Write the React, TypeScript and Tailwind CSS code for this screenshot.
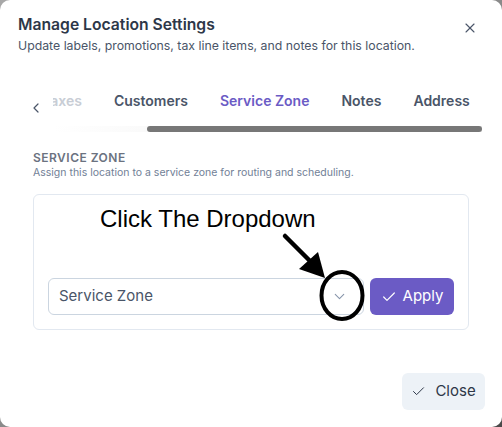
import React from "react";
import { Check, ChevronDown, ChevronLeft, X } from "lucide-react";

export default function App() {
  return (
    <div className="relative w-[502px] h-[427px] bg-linear-to-br from-[#a8a8a8] via-[#8a8a8a] to-[#4a4a4a] font-['Inter',sans-serif]">
      <div className="w-full h-full rounded-[10px] bg-white flex flex-col">
        {/* Header */}
        <div className="flex justify-between items-start pl-[18px] pr-[24px] pt-[14px]">
          <div>
            <h1 className="text-[15.7px] leading-[22px] font-semibold text-[#2d3748]">Manage Location Settings</h1>
            <p className="text-[12.3px] leading-5 text-[#4a5568]">Update labels, promotions, tax line items, and notes for this location.</p>
          </div>
          <X className="w-[16px] h-[16px] mt-[6px] text-[#4a5568]" strokeWidth={1.6} />
        </div>

        {/* Tabs */}
        <div className="flex items-start mt-[35px] pl-[28px] pr-[20px]">
          <ChevronLeft className="w-[16px] h-[16px] mt-[9px] mr-[9px] text-[#4a5568]" strokeWidth={1.8} />
          <div className="flex-1 flex flex-col overflow-hidden">
            <div className="flex ml-[-27px] text-[14px] leading-5 font-semibold whitespace-nowrap">
              <span className="px-[16px] text-[#c8cdd5]">Taxes</span>
              <span className="px-[16px] text-[#4a5568]">Customers</span>
              <span className="px-[16px] text-[#6b5bc5]">Service Zone</span>
              <span className="px-[16px] text-[#4a5568]">Notes</span>
              <span className="px-[16px] text-[#4a5568]">Address</span>
            </div>
            <div className="relative mt-[15px] h-[6px] bg-linear-to-r from-white to-[#ececec] via-[#f3f3f3]">
              <div className="absolute left-[94px] right-0 top-0 bottom-0 rounded-full bg-[#777777]" />
            </div>
          </div>
        </div>

        {/* Content */}
        <div className="px-[33px] mt-[18px]">
          <div className="text-[12px] leading-[15px] font-semibold tracking-[0.04em] text-[#6b7280]">SERVICE ZONE</div>
          <div className="text-[10.5px] leading-4 text-[#718096]">Assign this location to a service zone for routing and scheduling.</div>
          <div className="mt-[13px] border border-[#e2e8f0] rounded-[6px] pt-[10px] pb-[14px]">
            <div className="ml-[66px] text-[24px] leading-[28px] text-black font-['Liberation_Sans',Arial,sans-serif]">Click The Dropdown</div>
            <div className="mt-[45px] flex px-[14px] gap-[6px]">
              <div className="flex-1 h-[37px] border border-[#cbd5e0] rounded-[6px] flex items-center justify-between pl-[10px] pr-[15px]">
                <span className="text-[15px] text-[#4a5568]">Service Zone</span>
                <ChevronDown className="w-[17px] h-[17px] text-[#8795aa]" strokeWidth={1.5} />
              </div>
              <div className="w-[84px] h-[37px] rounded-[6px] bg-[#6b5bc5] flex items-center justify-center gap-[6px] text-white">
                <Check className="w-[16px] h-[16px]" strokeWidth={1.8} />
                <span className="text-[15px]">Apply</span>
              </div>
            </div>
          </div>
        </div>

        {/* Footer */}
        <div className="mt-auto flex justify-end pr-[17px] pb-[17px]">
          <div className="w-[83px] h-[37px] rounded-[6px] bg-[#edf2f7] flex items-center justify-center gap-[9px] text-[#2d3748]">
            <Check className="w-[15px] h-[15px]" strokeWidth={1.6} />
            <span className="text-[15px]">Close</span>
          </div>
        </div>
      </div>

      {/* Annotation overlay */}
      <svg className="absolute inset-0 pointer-events-none" width="502" height="427" viewBox="0 0 502 427">
        <line x1="285" y1="236" x2="311" y2="262" stroke="black" strokeWidth="4.5" strokeLinecap="round" />
        <polygon points="299,269 318,252 325,278" fill="black" />
        <ellipse cx="342" cy="295.5" rx="20.5" ry="23.5" fill="none" stroke="black" strokeWidth="4" />
      </svg>
    </div>
  );
}
